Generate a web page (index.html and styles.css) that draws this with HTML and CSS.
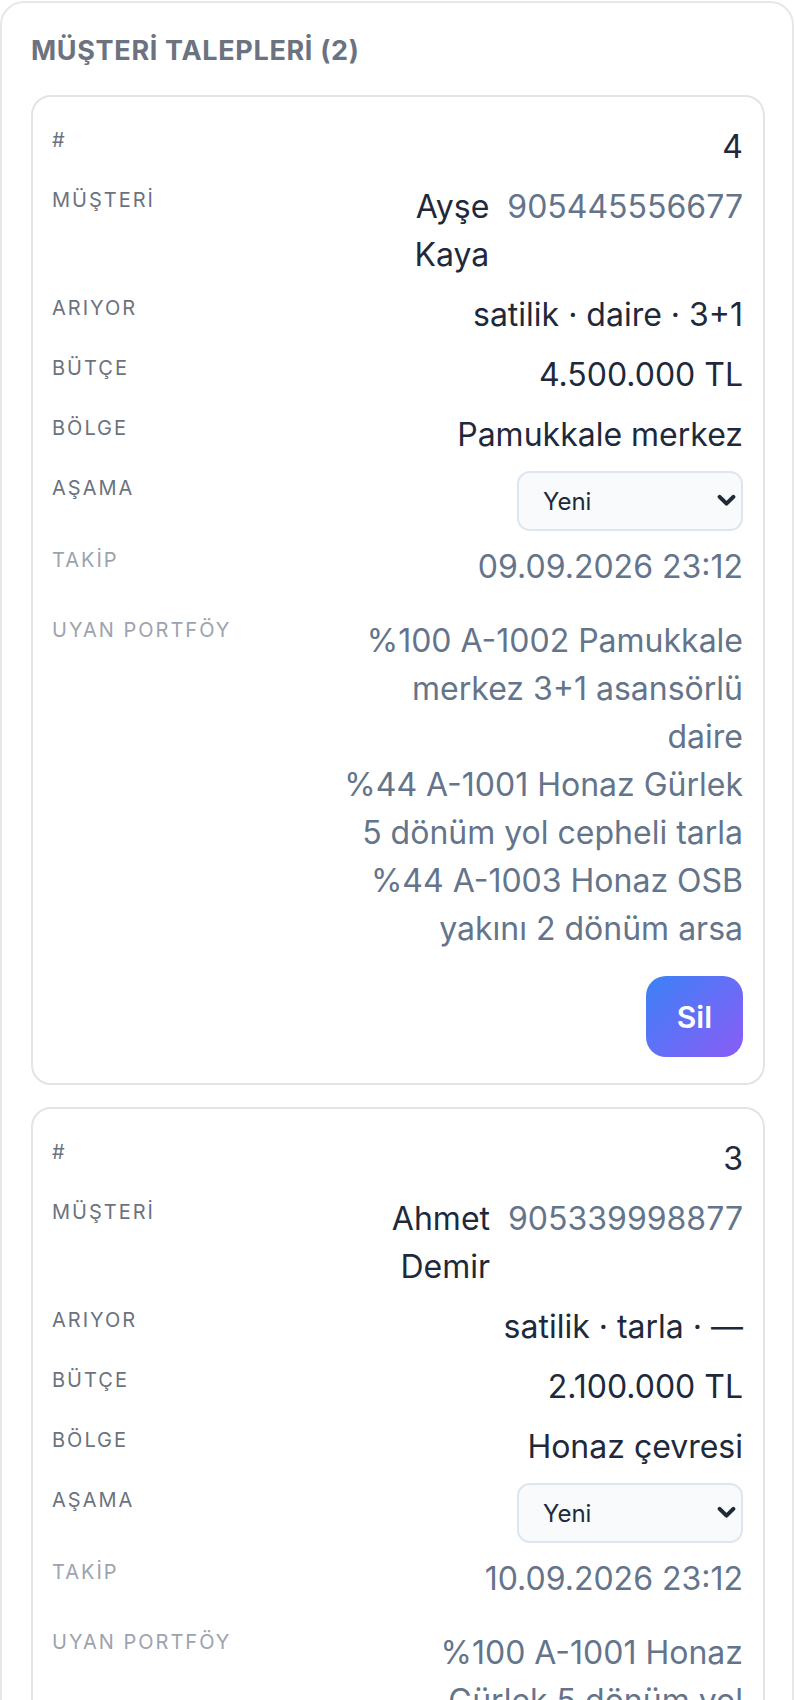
FILE: index.html
```html
<!DOCTYPE html>
<html lang="tr">
<head>
<meta charset="utf-8">
<title>Müşteri Talepleri</title>
<link rel="stylesheet" href="styles.css">
</head>
<body>
<section class="panel">
  <h2 class="panel-title">MÜŞTERİ TALEPLERİ (2)</h2>
  <div class="cards">
    <article class="card">
      <div class="row"><span class="label">#</span><span class="value">4</span></div>
      <div class="row"><span class="label">MÜŞTERİ</span>
        <div class="value customer"><span class="name">Ayşe Kaya</span><span class="phone">905445556677</span></div></div>
      <div class="row"><span class="label">ARIYOR</span><span class="value">satilik · daire · 3+1</span></div>
      <div class="row"><span class="label">BÜTÇE</span><span class="value">4.500.000 TL</span></div>
      <div class="row"><span class="label">BÖLGE</span><span class="value">Pamukkale merkez</span></div>
      <div class="row"><span class="label">AŞAMA</span>
        <div class="stage">
          <select class="stage-select"><option>Yeni</option><option>Görüşüldü</option><option>Teklif</option><option>Kapandı</option></select>
          <svg class="stage-arrow" viewBox="0 0 18 12" aria-hidden="true"><polyline points="2.5,2.5 9,9 15.5,2.5" fill="none" stroke="#1f2937" stroke-width="3.8" stroke-linecap="round" stroke-linejoin="round"/></svg>
        </div></div>
      <div class="row row-muted"><span class="label">TAKİP</span><span class="value">09.09.2026 23:12</span></div>
      <div class="row row-muted row-matches"><span class="label">UYAN PORTFÖY</span>
        <div class="value matches">
          <div>%100 A-1002 Pamukkale merkez 3+1 asansörlü daire</div>
          <div>%44 A-1001 Honaz Gürlek 5 dönüm yol cepheli tarla</div>
          <div>%44 A-1003 Honaz OSB yakını 2 dönüm arsa</div>
        </div></div>
      <div class="row row-actions"><button class="btn-delete" type="button">Sil</button></div>
    </article>

    <article class="card">
      <div class="row"><span class="label">#</span><span class="value">3</span></div>
      <div class="row"><span class="label">MÜŞTERİ</span>
        <div class="value customer"><span class="name">Ahmet Demir</span><span class="phone">905339998877</span></div></div>
      <div class="row"><span class="label">ARIYOR</span><span class="value">satilik · tarla · —</span></div>
      <div class="row"><span class="label">BÜTÇE</span><span class="value">2.100.000 TL</span></div>
      <div class="row"><span class="label">BÖLGE</span><span class="value">Honaz çevresi</span></div>
      <div class="row"><span class="label">AŞAMA</span>
        <div class="stage">
          <select class="stage-select"><option>Yeni</option><option>Görüşüldü</option><option>Teklif</option><option>Kapandı</option></select>
          <svg class="stage-arrow" viewBox="0 0 18 12" aria-hidden="true"><polyline points="2.5,2.5 9,9 15.5,2.5" fill="none" stroke="#1f2937" stroke-width="3.8" stroke-linecap="round" stroke-linejoin="round"/></svg>
        </div></div>
      <div class="row row-muted"><span class="label">TAKİP</span><span class="value">10.09.2026 23:12</span></div>
      <div class="row row-muted row-matches"><span class="label">UYAN PORTFÖY</span>
        <div class="value matches">
          <div>%100 A-1001 Honaz Gürlek 5 dönüm yol cepheli tarla</div>
        </div></div>
      <div class="row row-actions"><button class="btn-delete" type="button">Sil</button></div>
    </article>
  </div>
</section>
</body>
</html>
```

FILE: styles.css
```css
* {
  box-sizing: border-box;
}

body {
  margin: 0;
  background: #ffffff;
  font-family: Inter, "Noto Sans", "Liberation Sans", sans-serif;
  color: #1e293b;
}

.panel {
  margin: 1px 2px 0 0;
  border: 2px solid #e5e7eb;
  border-radius: 24px;
  padding: 28px 27px 28px 29px;
  background: #ffffff;
}

.panel-title {
  margin: 0 0 24px;
  font-size: 27px;
  line-height: 40px;
  font-weight: 700;
  letter-spacing: 0.025em;
  color: #6b7280;
}

.cards {
  display: flex;
  flex-direction: column;
  gap: 22px;
}

.card {
  border: 2px solid #e4e4e7;
  border-radius: 20px;
  padding: 20px 20px 20px 19px;
  background: #ffffff;
}

.row {
  display: flex;
  justify-content: space-between;
  align-items: flex-start;
  gap: 16px;
  padding: 6px 0;
}

.label {
  flex: none;
  font-size: 20px;
  line-height: 34px;
  letter-spacing: 0.1em;
  color: #6b7280;
}

.value {
  max-width: 400px;
  font-size: 32px;
  line-height: 48px;
  text-align: right;
  color: #1e293b;
}

.customer {
  display: flex;
  justify-content: flex-end;
  align-items: flex-start;
  gap: 18px;
}

.name {
  flex: none;
  width: min-content;
  text-align: right;
}

.phone {
  flex: none;
  color: #64748b;
}

.row-muted .label {
  color: #9ca3af;
}

.row-muted .value {
  color: #64748b;
}

.row-matches {
  padding: 14px 0;
}

.row-matches .label {
  margin-top: 2px;
}

.matches {
  padding: 6px 0 3px;
}

.stage {
  position: relative;
  width: 226px;
  height: 60px;
}

.stage-select {
  appearance: none;
  -webkit-appearance: none;
  display: block;
  width: 100%;
  height: 100%;
  margin: 0;
  border: 2px solid #dde5f0;
  border-radius: 13px;
  background: #f8fafc;
  padding: 0 40px 0 24px;
  font-family: Inter, "Noto Sans", sans-serif;
  font-size: 24px;
  color: #1e293b;
}

.stage-arrow {
  position: absolute;
  right: 7px;
  top: 23px;
  width: 19px;
  height: 13px;
  pointer-events: none;
}

.row-actions {
  justify-content: flex-end;
}

.btn-delete {
  height: 81px;
  padding: 0 31px;
  border: 0;
  border-radius: 20px;
  background: linear-gradient(135deg, #3b82f6, #8b5cf6);
  color: #ffffff;
  font-family: Inter, "Noto Sans", sans-serif;
  font-size: 30px;
  font-weight: 600;
  cursor: pointer;
}
```
